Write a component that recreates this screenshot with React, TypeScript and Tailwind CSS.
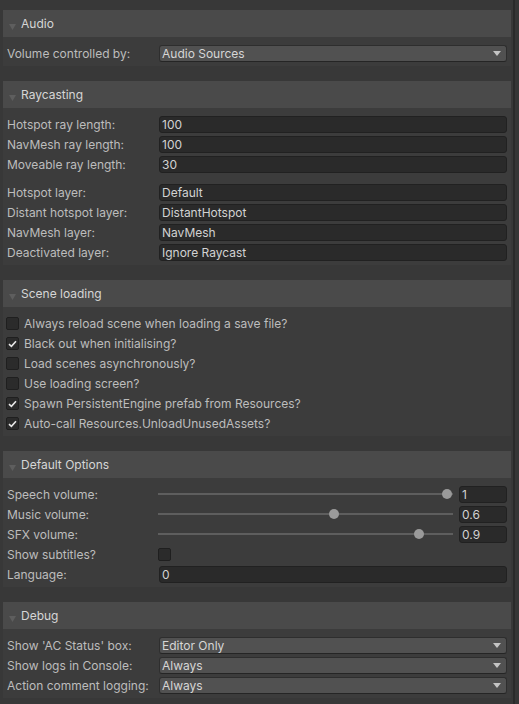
import React from "react";

const Header = ({ title }: { title: string }) => (
  <div className="flex h-[27px] items-center bg-[#4a4a4a] pl-[6px]">
    <svg width="7" height="6" viewBox="0 0 7 6" className="mt-[7px] shrink-0">
      <polygon points="0,0 7,0 3.5,6" fill="#5e5e5e" />
    </svg>
    <span className="ml-[5px] text-[12px] text-[#d6d6d6]">{title}</span>
  </div>
);

const Section = ({ title, children, first }: { title: string; children: React.ReactNode; first?: boolean }) => (
  <div className={first ? "mt-[10px]" : "mt-[15px]"}>
    <Header title={title} />
    <div className="flex flex-col gap-[3px] bg-[#3c3c3c] px-[4px] pb-[4px] pt-[8px]">{children}</div>
  </div>
);

const Label = ({ children }: { children: React.ReactNode }) => (
  <div className="w-[152px] shrink-0 truncate text-[12px] leading-[17px] text-[#bdbdbd]">{children}</div>
);

const TextField = ({ value }: { value: string }) => (
  <div className="flex h-[17px] flex-1 items-center rounded-[3px] border border-[#212121] bg-[#2a2a2a] pl-[2px] text-[12px] text-[#d2d2d2]">
    {value}
  </div>
);

const Dropdown = ({ value }: { value: string }) => (
  <div className="flex h-[17px] flex-1 items-center justify-between rounded-[3px] border border-[#2e2e2e] border-b-[#252525] bg-[#515151] pl-[2px] pr-[5px] text-[12px] text-[#d6d6d6]">
    <span>{value}</span>
    <svg width="8" height="5" viewBox="0 0 8 5">
      <polygon points="0,0 8,0 4,5" fill="#c4c4c4" />
    </svg>
  </div>
);

const Row = ({ label, children }: { label: string; children: React.ReactNode }) => (
  <div className="flex h-[17px] items-center">
    <Label>{label}</Label>
    {children}
  </div>
);

const Box = ({ checked }: { checked: boolean }) => (
  <div className="flex h-[13px] w-[13px] shrink-0 items-center justify-center rounded-[2px] border border-[#1f1f1f] bg-[#2b2b2b]">
    {checked && (
      <svg width="9" height="8" viewBox="0 0 9 8">
        <path d="M1 4.2 L3.4 6.4 L8 1.2" stroke="#e6e6e6" strokeWidth="1.6" fill="none" />
      </svg>
    )}
  </div>
);

const CheckRow = ({ label, checked }: { label: string; checked: boolean }) => (
  <div className="-ml-px flex h-[17px] items-center">
    <Box checked={checked} />
    <span className="ml-[5px] text-[12px] text-[#bdbdbd]">{label}</span>
  </div>
);

const SliderRow = ({ label, value }: { label: string; value: number }) => (
  <div className="flex h-[17px] items-center">
    <Label>{label}</Label>
    <div className="relative h-[17px] w-[294px] shrink-0">
      <div className="absolute left-[-1px] right-0 top-[7px] h-[2px] bg-[#5e5e5e]" />
      <div
        className="absolute top-[3px] h-[10px] w-[10px] rounded-full bg-[#9a9a9a]"
        style={{ left: `${value * 283}px` }}
      />
    </div>
    <div className="ml-[6px] flex h-[17px] flex-1 items-center rounded-[3px] border border-[#212121] bg-[#2a2a2a] pl-[2px] text-[12px] text-[#d2d2d2]">
      {String(value)}
    </div>
  </div>
);

export default function App() {
  return (
    <div className="flex h-[704px] w-[519px] overflow-hidden bg-[#383838] font-[Inter,sans-serif]">
      <div className="ml-[3px] mr-[2px] flex-1">
        <Section title="Audio" first>
          <Row label="Volume controlled by:">
            <Dropdown value="Audio Sources" />
          </Row>
        </Section>

        <Section title="Raycasting">
          <Row label="Hotspot ray length:">
            <TextField value="100" />
          </Row>
          <Row label="NavMesh ray length:">
            <TextField value="100" />
          </Row>
          <Row label="Moveable ray length:">
            <TextField value="30" />
          </Row>
          <div className="mt-[8px]">
            <Row label="Hotspot layer:">
              <TextField value="Default" />
            </Row>
          </div>
          <Row label="Distant hotspot layer:">
            <TextField value="DistantHotspot" />
          </Row>
          <Row label="NavMesh layer:">
            <TextField value="NavMesh" />
          </Row>
          <Row label="Deactivated layer:">
            <TextField value="Ignore Raycast" />
          </Row>
        </Section>

        <Section title="Scene loading">
          <CheckRow label="Always reload scene when loading a save file?" checked={false} />
          <CheckRow label="Black out when initialising?" checked />
          <CheckRow label="Load scenes asynchronously?" checked={false} />
          <CheckRow label="Use loading screen?" checked={false} />
          <CheckRow label="Spawn PersistentEngine prefab from Resources?" checked />
          <CheckRow label="Auto-call Resources.UnloadUnusedAssets?" checked />
        </Section>

        <Section title="Default Options">
          <SliderRow label="Speech volume:" value={1} />
          <SliderRow label="Music volume:" value={0.6} />
          <SliderRow label="SFX volume:" value={0.9} />
          <Row label="Show subtitles?">
            <div className="-ml-px">
              <Box checked={false} />
            </div>
          </Row>
          <Row label="Language:">
            <TextField value="0" />
          </Row>
        </Section>

        <Section title="Debug">
          <Row label="Show 'AC Status' box:">
            <Dropdown value="Editor Only" />
          </Row>
          <Row label="Show logs in Console:">
            <Dropdown value="Always" />
          </Row>
          <Row label="Action comment logging:">
            <Dropdown value="Always" />
          </Row>
        </Section>
      </div>
      <div className="w-[2px] bg-[#2a2a2a]" />
      <div className="w-[4px] bg-[#363636]" />
    </div>
  );
}
